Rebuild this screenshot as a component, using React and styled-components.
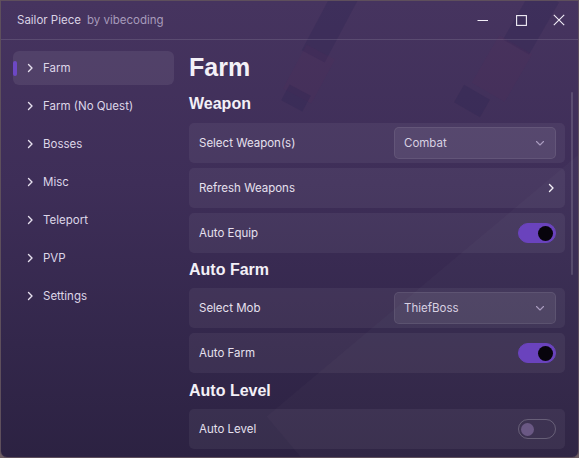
import React from "react";
import styled, { createGlobalStyle } from "styled-components";

const Global = createGlobalStyle`
  html, body { margin: 0; padding: 0; background: #6d5d63; }
  * { box-sizing: border-box; }
`;

const Window = styled.div`
  position: relative;
  width: 579px;
  height: 458px;
  display: flex;
  flex-direction: column;
  overflow: hidden;
  border: 1px solid #5e4f5c;
  border-radius: 0 0 7px 7px;
  background: linear-gradient(180deg, #46345f 0%, #3e2e58 40%, #33274b 75%, #2c2242 100%);
  font-family: "Inter", "Open Sans", sans-serif;
  color: #e8e2f0;
`;

const Deco = styled.div`
  position: absolute;
  pointer-events: none;
  transform: rotate(${(p) => p.$rot}deg);
  background: ${(p) => p.$bg};
`;

const TitleBar = styled.div`
  position: relative;
  height: 39px;
  flex: none;
  display: flex;
  align-items: center;
  padding-left: 16px;
  border-bottom: 1px solid rgba(255, 255, 255, 0.12);
`;

const Title = styled.span`
  font-size: 11.5px;
  color: #d9d2e4;
`;

const Sub = styled.span`
  font-size: 11.5px;
  color: #a79bbb;
  margin-left: 6px;
`;

const Controls = styled.div`
  margin-left: auto;
  display: flex;
  align-items: center;
  height: 100%;
`;

const CtrlBtn = styled.div`
  width: 38px;
  height: 100%;
  display: flex;
  align-items: center;
  justify-content: center;
  color: #f2eef7;
`;

const Body = styled.div`
  position: relative;
  flex: 1;
  display: flex;
  min-height: 0;
`;

const Sidebar = styled.nav`
  width: 180px;
  flex: none;
  display: flex;
  flex-direction: column;
  gap: 4px;
  padding: 11px 7px 0 12px;
`;

const NavItem = styled.div`
  position: relative;
  height: 34px;
  display: flex;
  align-items: center;
  gap: 8px;
  padding-left: 12px;
  border-radius: 6px;
  font-size: 11.5px;
  color: #ddd6e8;
  background: ${(p) => (p.$active ? "rgba(255,255,255,0.075)" : "transparent")};
`;

const Indicator = styled.span`
  position: absolute;
  left: 0;
  top: 10px;
  width: 4px;
  height: 15px;
  border-radius: 2px;
  background: #6d48c4;
`;

const Content = styled.main`
  flex: 1;
  display: flex;
  flex-direction: column;
  padding: 12px 13px 0 8px;
`;

const PageTitle = styled.h1`
  margin: 0;
  font-family: "Liberation Sans", Arial, sans-serif;
  font-weight: 700;
  font-size: 25px;
  line-height: 30px;
  color: #f3f0f7;
`;

const Section = styled.h2`
  margin: ${(p) => p.$mt}px 0 ${(p) => p.$mb}px;
  font-family: "Liberation Sans", Arial, sans-serif;
  font-weight: 700;
  font-size: 16px;
  line-height: 22px;
  color: #f3f0f7;
`;

const Rows = styled.div`
  display: flex;
  flex-direction: column;
  gap: 5px;
`;

const Row = styled.div`
  height: 40px;
  display: flex;
  align-items: center;
  justify-content: space-between;
  padding: 0 9px 0 10px;
  border-radius: 5px;
  background: rgba(255, 255, 255, 0.055);
  font-size: 11.5px;
  color: #e6e0ee;
`;

const Dropdown = styled.div`
  width: 162px;
  height: 32px;
  display: flex;
  align-items: center;
  justify-content: space-between;
  padding: 0 10px 0 9px;
  border-radius: 5px;
  background: rgba(255, 255, 255, 0.07);
  border: 1px solid rgba(255, 255, 255, 0.08);
  color: #d8d1e2;
  font-size: 11.5px;
`;

const Toggle = styled.div`
  width: 38px;
  height: 20px;
  border-radius: 10px;
  display: flex;
  align-items: center;
  padding: 0 2px;
  justify-content: ${(p) => (p.$on ? "flex-end" : "flex-start")};
  background: ${(p) => (p.$on ? "#6a43bd" : "transparent")};
  border: 1px solid ${(p) => (p.$on ? "#6a43bd" : "rgba(255,255,255,0.22)")};
`;

const Knob = styled.span`
  width: ${(p) => (p.$on ? 15 : 13)}px;
  height: ${(p) => (p.$on ? 15 : 13)}px;
  border-radius: 50%;
  background: ${(p) => (p.$on ? "#07040c" : "#6a5884")};
`;

const Scrollbar = styled.div`
  position: absolute;
  right: 5px;
  top: 52px;
  width: 2px;
  height: 183px;
  border-radius: 1px;
  background: rgba(255, 255, 255, 0.14);
`;

const Chevron = ({ size = 10, color = "#e6e0ee", dir = "right" }) => (
  <svg width={size} height={size} viewBox="0 0 10 10" fill="none">
    {dir === "right" ? (
      <path d="M3.5 1.5 L7 5 L3.5 8.5" stroke={color} strokeWidth="1.4" strokeLinecap="round" strokeLinejoin="round" />
    ) : (
      <path d="M1.5 3.5 L5 7 L8.5 3.5" stroke={color} strokeWidth="1.1" strokeLinecap="round" strokeLinejoin="round" />
    )}
  </svg>
);

const nav = ["Farm", "Farm (No Quest)", "Bosses", "Misc", "Teleport", "PVP", "Settings"];

function Switch({ on }) {
  return (
    <Toggle $on={on}>
      <Knob $on={on} />
    </Toggle>
  );
}

const dark = "rgba(38,30,78,0.22)";
const red = "rgba(120,40,90,0.08)";

export default function App() {
  return (
    <>
      <Global />
      <Window>
        <Deco $rot={28} $bg={dark} style={{ left: 318, top: -20, width: 26, height: 80 }} />
        <Deco $rot={28} $bg={red} style={{ left: 292, top: 48, width: 32, height: 50 }} />
        <Deco $rot={28} $bg={dark} style={{ left: 283, top: 88, width: 24, height: 18 }} />
        <Deco $rot={30} $bg={dark} style={{ left: 515, top: -10, width: 30, height: 60 }} />
        <Deco $rot={30} $bg={red} style={{ left: 482, top: 40, width: 38, height: 55 }} />
        <Deco $rot={30} $bg={dark} style={{ left: 456, top: 90, width: 30, height: 20 }} />
        <Deco $rot={-40} $bg="rgba(255,255,255,0.018)" style={{ left: 300, top: 250, width: 420, height: 260 }} />
        <TitleBar>
          <Title>Sailor Piece</Title>
          <Sub>by vibecoding</Sub>
          <Controls>
            <CtrlBtn>
              <svg width="12" height="12" viewBox="0 0 12 12">
                <path d="M0.5 6.5 H11" stroke="currentColor" strokeWidth="1.1" />
              </svg>
            </CtrlBtn>
            <CtrlBtn>
              <svg width="11" height="11" viewBox="0 0 11 11" fill="none">
                <rect x="0.6" y="0.6" width="9.8" height="9.8" stroke="currentColor" strokeWidth="1.1" />
              </svg>
            </CtrlBtn>
            <CtrlBtn>
              <svg width="12" height="12" viewBox="0 0 12 12" fill="none">
                <path d="M0.8 0.8 L11.2 11.2 M11.2 0.8 L0.8 11.2" stroke="currentColor" strokeWidth="1.1" />
              </svg>
            </CtrlBtn>
          </Controls>
        </TitleBar>
        <Body>
          <Sidebar>
            {nav.map((n, i) => (
              <NavItem key={n} $active={i === 0}>
                {i === 0 && <Indicator />}
                <Chevron size={10} />
                {n}
              </NavItem>
            ))}
          </Sidebar>
          <Content>
            <PageTitle>Farm</PageTitle>
            <Section $mt={11} $mb={8}>Weapon</Section>
            <Rows>
              <Row>
                Select Weapon(s)
                <Dropdown>
                  Combat
                  <Chevron dir="down" color="#a99bbf" />
                </Dropdown>
              </Row>
              <Row>
                Refresh Weapons
                <Chevron size={10} color="#f3f0f7" />
              </Row>
              <Row>
                Auto Equip
                <Switch on />
              </Row>
            </Rows>
            <Section $mt={6} $mb={7}>Auto Farm</Section>
            <Rows>
              <Row>
                Select Mob
                <Dropdown>
                  ThiefBoss
                  <Chevron dir="down" color="#a99bbf" />
                </Dropdown>
              </Row>
              <Row>
                Auto Farm
                <Switch on />
              </Row>
            </Rows>
            <Section $mt={7} $mb={7}>Auto Level</Section>
            <Rows>
              <Row>
                Auto Level
                <Switch on={false} />
              </Row>
            </Rows>
          </Content>
          <Scrollbar />
        </Body>
      </Window>
    </>
  );
}
